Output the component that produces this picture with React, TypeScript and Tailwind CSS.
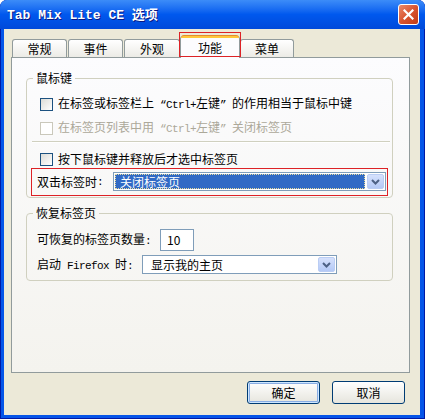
import React from 'react';

const cjk = "font-['Noto_Sans_CJK_SC','Noto_Sans_CJK_JP',sans-serif]";

function M({ children }: { children: React.ReactNode }) {
  return <span className="font-['Liberation_Mono','DejaVu_Sans_Mono',monospace] text-[11px] tracking-[-0.6px]">{children}</span>;
}

function Box({ disabled }: { disabled?: boolean }) {
  return (
    <span
      className={`block w-[13px] h-[13px] shrink-0 border ${
        disabled ? 'border-[#CAC8BB] bg-white' : 'border-[#1C5180] bg-linear-to-br from-[#DCDCD7] to-white'
      }`}
    />
  );
}

function CheckRow({ disabled, children, className = '' }: { disabled?: boolean; children: React.ReactNode; className?: string }) {
  return (
    <div className={`flex items-center h-[18px] pl-[13px] gap-[5px] ${className}`}>
      <Box disabled={disabled} />
      <span className={disabled ? 'text-[#ACA899]' : 'text-black'}>{children}</span>
    </div>
  );
}

function DropBtn() {
  return (
    <span className="w-[17px] h-full shrink-0 flex items-center justify-center bg-linear-to-b from-[#D6E1FC] to-[#B4C9F6] border border-[#BACDF4] rounded-[2px]">
      <svg width="9" height="6" viewBox="0 0 9 6">
        <path d="M1 1 L4.5 4.5 L8 1" fill="none" stroke="#4D6185" strokeWidth="2" />
      </svg>
    </span>
  );
}

function Tab({ label, w }: { label: string; w: string }) {
  return (
    <div
      className={`${w} h-[18px] border border-b-0 border-[#919B9C] rounded-t-[3px] bg-linear-to-b from-white to-[#ECEBE6] flex items-center justify-center`}
    >
      {label}
    </div>
  );
}

function Button({ label, primary }: { label: string; primary?: boolean }) {
  return (
    <div
      className={`w-[73px] h-[23px] border border-[#003C74] rounded-[3px] bg-linear-to-b from-white to-[#E6E5DD] flex items-center justify-center ${
        primary ? 'shadow-[inset_0_0_0_1px_#CEE7FF,inset_0_0_0_2px_#89ADE4]' : ''
      }`}
    >
      {label}
    </div>
  );
}

export default function App() {
  return (
    <div className={`w-[425px] h-[419px] bg-[#0555E8] rounded-t-[7px] overflow-hidden flex flex-col text-[12px] leading-[14px] ${cjk} shadow-[inset_1px_0_#0019A5,inset_-1px_0_#0019A5,inset_0_-1px_#0019A5]`}>
      {/* Title bar */}
      <div className="h-[29px] shrink-0 flex items-center pl-[7px] pr-[6px] bg-linear-to-b from-[#3C8CF8] via-[#0058EE] to-[#0049DA]">
        <span className="text-white font-bold text-[13px] [text-shadow:1px_1px_#0A1883] flex-1">
          <span className="font-['Liberation_Mono',monospace]">Tab Mix Lite CE </span>
          <span className={cjk}>选项</span>
        </span>
        <div className="w-[21px] h-[21px] rounded-[3px] border border-white bg-linear-to-br from-[#E9896A] via-[#D9542F] to-[#C03A17] flex items-center justify-center">
          <svg width="11" height="11" viewBox="0 0 11 11">
            <path d="M1.5 1.5 L9.5 9.5 M9.5 1.5 L1.5 9.5" stroke="white" strokeWidth="2.2" strokeLinecap="square" />
          </svg>
        </div>
      </div>

      {/* Body */}
      <div className="flex-1 ml-[4px] mr-[5px] mb-[4px] bg-[#ECE9D8] pl-[7px] flex flex-col">
        {/* Tabs */}
        <div className="h-[28px] flex items-end pl-[1px] relative z-10">
          <Tab label="常规" w="w-[55px]" />
          <div className="ml-[1px]"><Tab label="事件" w="w-[55px]" /></div>
          <div className="ml-[1px]"><Tab label="外观" w="w-[56px]" /></div>
          <div className="relative h-[22px] w-[60px] -mb-[1px] bg-[#FCFCFE] border-x border-[#919B9C] rounded-t-[3px] flex items-center justify-center">
            <span className="absolute left-0 right-0 -top-[1px] h-[3px] rounded-t-[3px] bg-[#FFC73C] border-t border-[#E68B2C]" />
            <span className="pt-[2px]">功能</span>
            <span className="absolute -top-[4px] -left-[2px] -right-[2px] bottom-[1px] border border-[#DD2226]" />
          </div>
          <Tab label="菜单" w="w-[54px]" />
        </div>

        {/* Panel */}
        <div className="w-[399px] h-[316px] border border-[#919B9C] bg-linear-to-b from-[#FCFCFE] to-[#F4F3EE] pl-[14px] pr-[16px]">
          <fieldset className="mt-[13px] border border-[#D0D0BF] rounded-[4px] pt-[10px] pb-[1px]">
            <legend className="ml-[6px] px-[3px] leading-[14px]">鼠标键</legend>
            <CheckRow>
              在标签或标签栏上<M> “Ctrl+</M>左键<M>” </M>的作用相当于鼠标中键
            </CheckRow>
            <CheckRow disabled className="mt-[6px]">
              在标签页列表中用<M> “Ctrl+</M>左键<M>” </M>关闭标签页
            </CheckRow>
            <div className="mt-[4px] ml-[5px] mr-[2px] border-t border-[#D0D0BF] border-b border-b-white" />
            <CheckRow className="mt-[7px]">按下鼠标键并释放后才选中标签页</CheckRow>
            <div className="mx-[4px] h-[28px] border border-[#DD2226] flex items-start pt-[3px] pl-[5px] pr-[1px]">
              <span className="w-[76px] h-[19px] flex items-center">
                双击标签时<M>: </M>
              </span>
              <div className="flex-1 h-[19px] border border-[#7F9DB9] bg-white flex p-[1px]">
                <div className="flex-1 mr-[2px] bg-[#316AC5] border border-dotted border-[#E6DB9C] text-white flex items-center pl-[4px]">
                  关闭标签页
                </div>
                <DropBtn />
              </div>
            </div>
          </fieldset>

          <fieldset className="mt-[8px] border border-[#D0D0BF] rounded-[4px] pt-[9px] pb-[6px] pl-[10px]">
            <legend className="ml-[-4px] px-[3px] leading-[14px]">恢复标签页</legend>
            <div className="flex items-center h-[22px]">
              <span className="w-[123px]">可恢复的标签页数量<M>: </M></span>
              <div className="w-[34px] h-[22px] border border-[#7F9DB9] bg-white flex items-center pl-[6px]">10</div>
            </div>
            <div className="flex items-center mt-[4px] h-[19px]">
              <span className="w-[105px]">启动<M> Firefox </M>时<M>: </M></span>
              <div className="w-[195px] h-[19px] border border-[#7F9DB9] bg-white flex p-[1px]">
                <span className="flex-1 pl-[7px] flex items-center">显示我的主页</span>
                <DropBtn />
              </div>
            </div>
          </fieldset>
        </div>

        {/* Buttons */}
        <div className="flex justify-end gap-[12px] pr-[15px] mt-[8px]">
          <Button label="确定" primary />
          <Button label="取消" />
        </div>
      </div>
    </div>
  );
}
